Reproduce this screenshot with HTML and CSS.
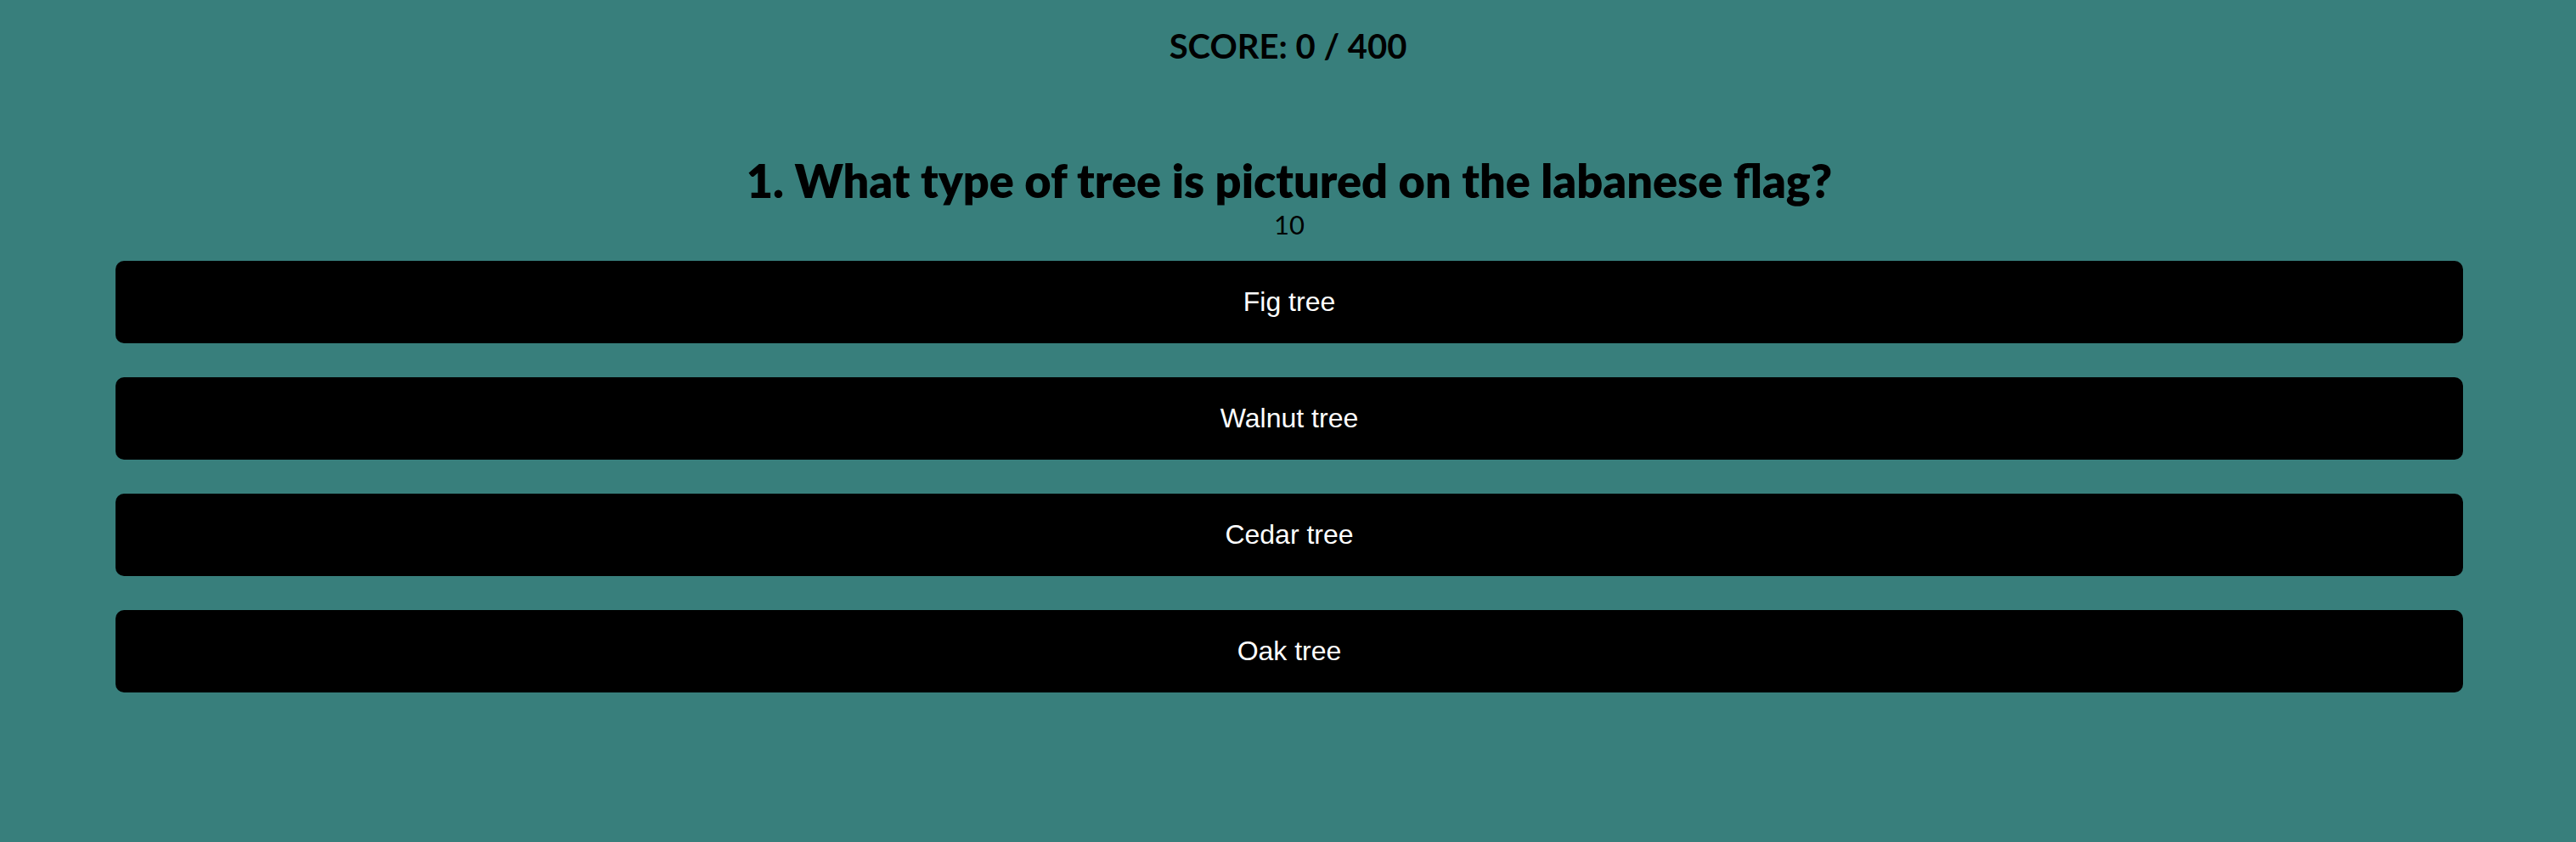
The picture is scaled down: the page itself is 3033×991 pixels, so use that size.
FILE: index.html
```html
<!DOCTYPE html>
<html lang="en">
<head>
<meta charset="utf-8">
<title>Quiz</title>
<link rel="stylesheet" href="styles.css">
</head>
<body>
<header class="score">SCORE: 0 / 400</header>
<main class="quiz">
  <h2 class="question">1. What type of tree is pictured on the labanese flag?</h2>
  <div class="timer">10</div>
  <div class="answers">
    <button class="answer">Fig tree</button>
    <button class="answer">Walnut tree</button>
    <button class="answer">Cedar tree</button>
    <button class="answer">Oak tree</button>
  </div>
</main>
</body>
</html>
```
FILE: styles.css
```css
html, body {
  margin: 0;
  padding: 0;
}
body {
  background: #387f7c;
  color: #000;
  font-family: "Lato", "Inter", sans-serif;
  min-height: 100vh;
}
.score {
  text-align: center;
  font-weight: 700;
  font-size: 40px;
  line-height: 48px;
  padding-top: 30px;
}
.quiz {
  padding: 0 133px 0 136px;
  display: flex;
  flex-direction: column;
  align-items: stretch;
}
.question {
  margin: 105px 0 0;
  text-align: center;
  font-weight: 800;
  font-size: 54px;
  line-height: 60px;
}
.timer {
  text-align: center;
  font-size: 31px;
  line-height: 36px;
  margin-top: 3px;
}
.answers {
  display: flex;
  flex-direction: column;
  gap: 40px;
  margin-top: 25px;
}
.answer {
  height: 97px;
  border: none;
  border-radius: 10px;
  background: #000;
  color: #fff;
  font-family: "Liberation Sans", Arial, sans-serif;
  font-size: 32px;
  cursor: pointer;
  padding: 0;
}
```
